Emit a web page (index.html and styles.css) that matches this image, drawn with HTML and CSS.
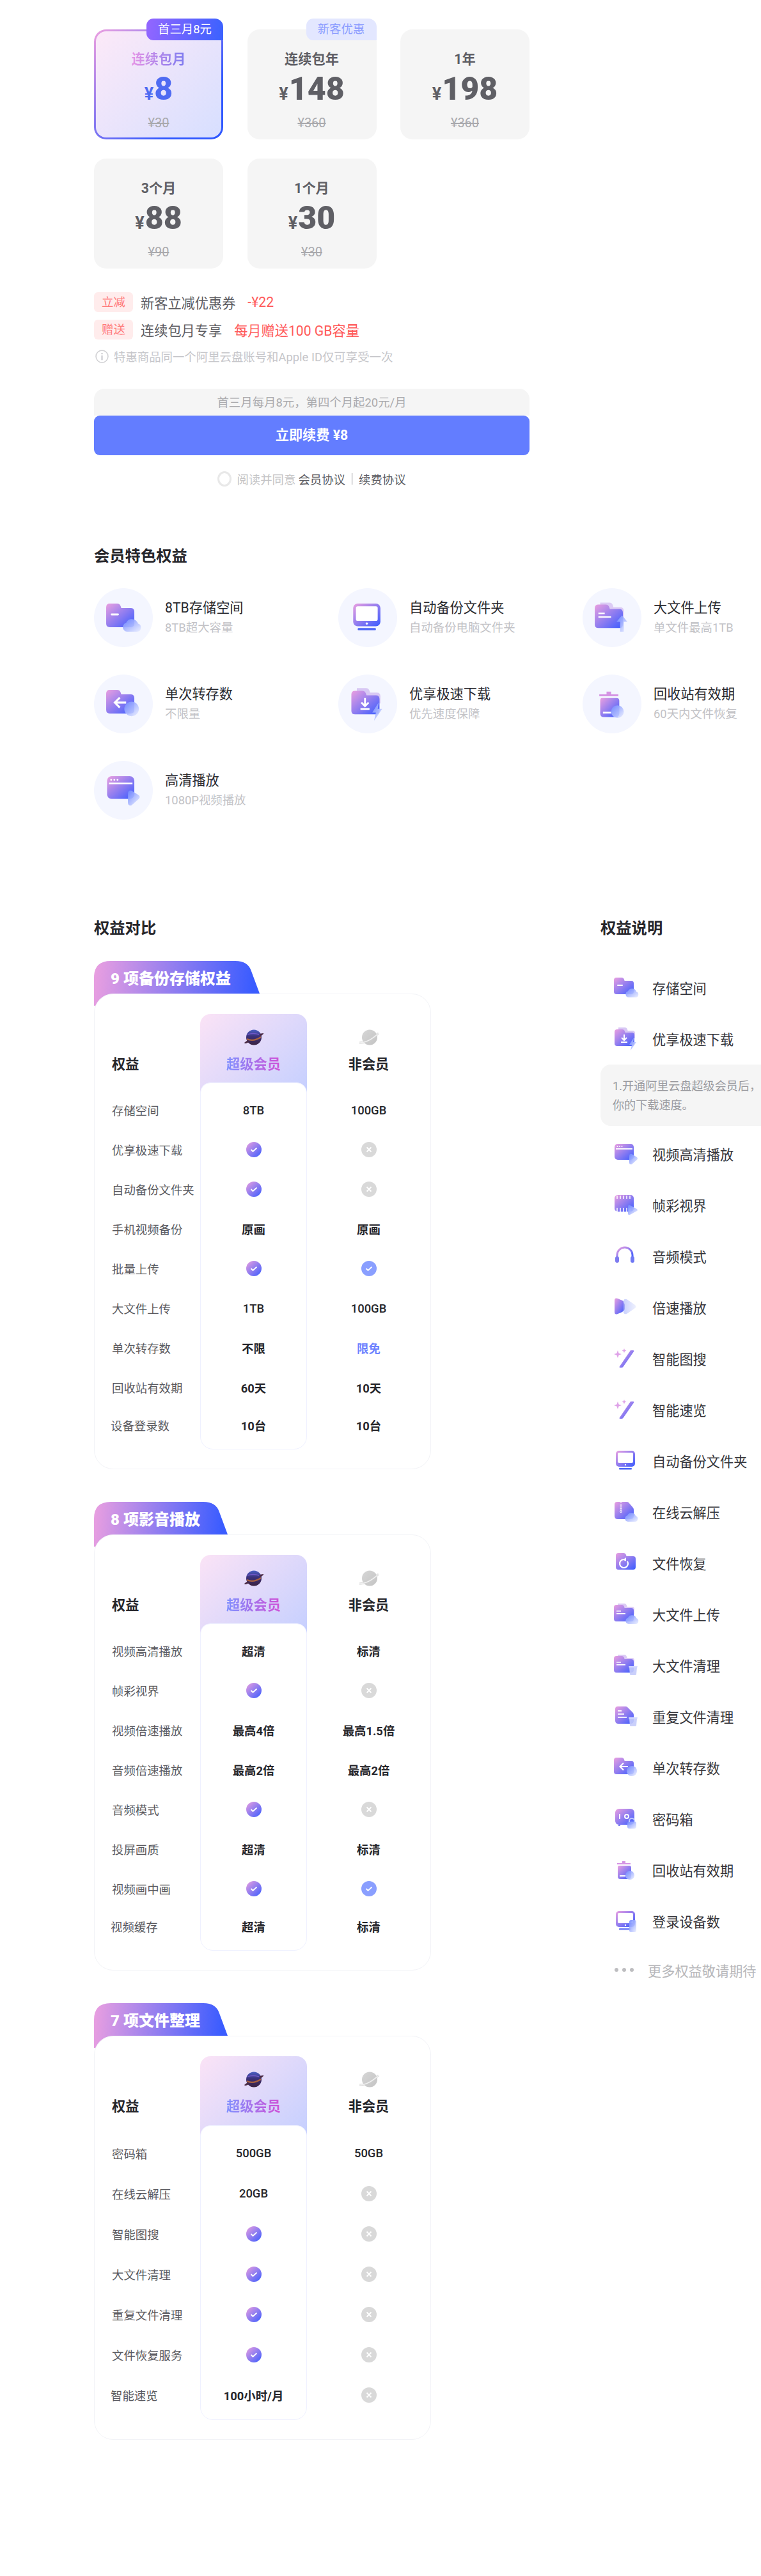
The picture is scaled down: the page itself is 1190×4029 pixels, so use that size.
FILE: index.html
```html
<!DOCTYPE html>
<html lang="zh-CN">
<head>
<meta charset="utf-8">
<title>阿里云盘会员</title>
<link rel="stylesheet" href="styles.css">
</head>
<body>
<svg class="defs" width="0" height="0" aria-hidden="true">
  <defs>
    <linearGradient id="g" x1="0" y1="0" x2="1" y2="1"><stop offset="0" stop-color="#ea9fe0"/><stop offset="1" stop-color="#3a5cff"/></linearGradient>
    <linearGradient id="o" x1="0" y1="0" x2="1" y2="1"><stop offset="0" stop-color="#6f86ff" stop-opacity=".95"/><stop offset="1" stop-color="#e9edff" stop-opacity=".85"/></linearGradient>
    <linearGradient id="o2" x1="0" y1="0" x2="1" y2="0"><stop offset="0" stop-color="#c8cffc" stop-opacity=".95"/><stop offset="1" stop-color="#eceffe" stop-opacity=".9"/></linearGradient>
    <linearGradient id="pl" x1="0" y1="0" x2="0" y2="1"><stop offset="0" stop-color="#4b5fc4"/><stop offset=".45" stop-color="#3a2f78"/><stop offset="1" stop-color="#3b2340"/></linearGradient>
    <linearGradient id="pg" x1="0" y1="0" x2="1" y2="1"><stop offset="0" stop-color="#d6d6d6"/><stop offset="1" stop-color="#c4c4c4"/></linearGradient>

    <symbol id="folder" viewBox="0 0 38 31" overflow="visible"><path fill="url(#g)" d="M4 0h8q3 0 4 3l.6 2H27q4 0 4 4v13q0 4-4 4H4q-4 0-4-4V4q0-4 4-4z"/></symbol>
    <symbol id="cloud" viewBox="0 0 38 31" overflow="visible"><path fill="url(#o)" d="M23 31a5 5 0 0 1-1-9.800a7 7 0 0 1 13 .8a4.600 4.600 0 0 1-1 9z"/></symbol>

    <symbol id="i-storage" viewBox="0 0 38 31" overflow="visible">
      <use href="#folder" width="38" height="31"/><rect x="5" y="11" width="9" height="2" rx="1" fill="#fff"/><use href="#cloud" width="38" height="31"/>
    </symbol>
    <symbol id="i-download" viewBox="0 0 38 31" overflow="visible">
      <path fill="#d8c8f4" d="M7 -2h10q3 0 4 3l.6 2H29q4 0 4 4v8H7z"/>
      <g transform="translate(1 1)"><use href="#folder" width="38" height="31"/></g>
      <path fill="none" stroke="#fff" stroke-width="2" d="M16 9v9M12 14l4 4 4-4M11 21h10"/>
      <path fill="url(#o)" d="M31 14l-7 11h4l-2 9 9-13h-5z"/>
    </symbol>
    <symbol id="i-video" viewBox="0 0 38 31" overflow="visible">
      <rect x="1" y="0" width="30" height="25" rx="5" fill="url(#g)"/>
      <circle cx="5.500" cy="4" r="1" fill="#fff"/><circle cx="9" cy="4" r="1" fill="#fff"/><circle cx="12.500" cy="4" r="1" fill="#fff"/>
      <rect x="3" y="7" width="26" height="1.800" fill="#fff"/>
      <path fill="url(#o)" d="M24 19q0-4 4-3l8 5q2 2 0 4l-8 7q-4 1-4-3z"/>
    </symbol>
    <symbol id="i-film" viewBox="0 0 38 31" overflow="visible">
      <rect x="1" y="0" width="30" height="26" rx="5" fill="url(#g)"/>
      <path stroke="#fff" stroke-width="1.500" d="M5 1v5M10 1v5M15 1v5M20 1v5M25 1v5M5 20v6M10 20v6M15 20v6M20 20v6M25 20v6" fill="none"/>
      <path fill="url(#o)" d="M22 18q0-3 3-2l11 6q2 2 0 3l-11 6q-3 1-3-2z"/>
    </symbol>
    <symbol id="i-phones" viewBox="0 0 38 31" overflow="visible">
      <path fill="none" stroke="url(#g)" stroke-width="3" d="M5 18v-4a12 12 0 0 1 24 0v4"/>
      <rect x="2" y="16" width="6" height="10" rx="3" fill="#7d7bf0"/><rect x="26" y="16" width="6" height="10" rx="3" fill="#6f78f4"/>
    </symbol>
    <symbol id="i-speed" viewBox="0 0 38 31" overflow="visible">
      <path fill="url(#g)" d="M1 5q0-5 5-3l7 3q3 1.500 3 5v8q0 3-3 5l-7 3q-5 2-5-3z"/>
      <path fill="url(#o2)" d="M15 5q1-3 5-2l13 9q3 3 0 5l-13 9q-4 1-5-2z"/>
      <path fill="#7b7ff0" fill-opacity=".55" d="M15 9q2 .5 2 3v6q0 2-2 3z"/>
    </symbol>
    <symbol id="i-wand" viewBox="0 0 38 31" overflow="visible">
      <path fill="url(#g)" d="M26 3h4q2 0 1 2L15 28q-1 2-3 2H9q-1-1 0-2z"/>
      <path fill="#dfa2e8" d="M6 3l1.600 4.400L12 9l-4.400 1.600L6 15l-1.600-4.400L0 9l4.400-1.600zM16 0l1 2.500 2.500 1-2.500 1-1 2.500-1-2.500-2.500-1 2.500-1z"/>
    </symbol>
    <symbol id="i-backup" viewBox="0 0 38 31" overflow="visible">
      <rect x="3" y="0" width="30" height="25" rx="5" fill="url(#g)"/>
      <rect x="6" y="3" width="24" height="16" rx="2" fill="#fff"/><circle cx="18" cy="22" r="1.200" fill="#fff"/>
      <rect x="8" y="27" width="20" height="2.500" rx="1" fill="#4c66f6"/>
    </symbol>
    <symbol id="i-unzip" viewBox="0 0 38 31" overflow="visible">
      <path fill="url(#g)" d="M5 0h15q2 0 3 1l6 7q2 2 2 4v10q0 5-5 5H6q-5 0-5-5V4q0-4 4-4z"/>
      <path stroke="#fff" stroke-width="3" stroke-dasharray="1 1.200" d="M11 1v12" fill="none"/><circle cx="11" cy="15" r="1.500" fill="none" stroke="#fff"/>
      <g transform="translate(-1 0)"><use href="#cloud" width="38" height="31"/></g>
    </symbol>
    <symbol id="i-restore" viewBox="0 0 38 31" overflow="visible">
      <g transform="translate(3 0)"><use href="#folder" width="38" height="31"/></g>
      <path fill="none" stroke="#fff" stroke-width="2.200" d="M15 10a6.500 6.500 0 1 0 6 3"/><path fill="#fff" d="M19 7l-5 3.500 5 2.500z"/>
    </symbol>
    <symbol id="i-bigup" viewBox="0 0 38 31" overflow="visible">
      <path fill="#dccbf5" d="M6 -1h10q3 0 4 3l.6 2H28q4 0 4 4v8H6z"/>
      <g transform="translate(0 1)"><use href="#folder" width="38" height="31"/></g>
      <rect x="4" y="10" width="7" height="1.600" fill="#fff"/><rect x="4" y="14" width="14" height="1.600" fill="#fff"/>
      <use href="#cloud" width="38" height="31"/>
    </symbol>
    <symbol id="i-bigarrow" viewBox="0 0 38 31" overflow="visible">
      <path fill="#dccbf5" d="M6 -1h10q3 0 4 3l.6 2H28q4 0 4 4v8H6z"/>
      <g transform="translate(0 1)"><use href="#folder" width="38" height="31"/></g>
      <rect x="4" y="10" width="7" height="1.600" fill="#fff"/><rect x="4" y="14" width="14" height="1.600" fill="#fff"/>
      <path fill="url(#o)" d="M30 13l6 7h-4v11h-4V20h-4z"/>
    </symbol>
    <symbol id="i-bin" viewBox="0 0 38 31" overflow="visible">
      <path fill="#c4cbfb" fill-opacity=".9" d="M24 19h12l-1 11q0 1-2 1h-6q-2 0-2-1z"/>
      <rect x="23" y="17" width="14" height="2" rx="1" fill="#d5daff"/>
    </symbol>
    <symbol id="i-bigclean" viewBox="0 0 38 31" overflow="visible">
      <path fill="#dccbf5" d="M6 -1h10q3 0 4 3l.6 2H28q4 0 4 4v8H6z"/>
      <g transform="translate(0 1)"><use href="#folder" width="38" height="31"/></g>
      <rect x="4" y="10" width="7" height="1.600" fill="#fff"/><rect x="4" y="14" width="14" height="1.600" fill="#fff"/>
      <use href="#i-bin" width="38" height="31"/>
    </symbol>
    <symbol id="i-dup" viewBox="0 0 38 31" overflow="visible">
      <path fill="url(#g)" d="M6 0h12q2 0 3 1l8 8q2 2 2 4v9q0 5-5 5H7q-5 0-5-5V4q0-4 4-4z"/>
      <rect x="6" y="6" width="6" height="1.800" fill="#fff"/><rect x="6" y="11" width="10" height="1.800" fill="#fff"/><rect x="6" y="16" width="14" height="1.800" fill="#fff"/>
      <use href="#i-bin" width="38" height="31"/>
    </symbol>
    <symbol id="i-transfer" viewBox="0 0 38 31" overflow="visible">
      <use href="#folder" width="38" height="31"/>
      <path fill="none" stroke="#fff" stroke-width="2.200" d="M22 14H10M15 8.500L9.500 14 15 19.500"/>
      <circle cx="28" cy="21" r="8" fill="url(#o)"/>
    </symbol>
    <symbol id="i-vault" viewBox="0 0 38 31" overflow="visible">
      <rect x="2" y="0" width="30" height="25" rx="6" fill="url(#g)"/><rect x="7" y="25" width="3" height="2" fill="#7b7ff0"/>
      <rect x="8" y="8" width="2" height="8" fill="#fff"/><circle cx="20" cy="12" r="3" fill="none" stroke="#fff" stroke-width="2"/>
      <rect x="21" y="20" width="14" height="11" rx="3" fill="url(#o)"/><path fill="none" stroke="#bcc5ff" stroke-width="2" d="M24 21v-2a4 4 0 0 1 8 0v2"/>
    </symbol>
    <symbol id="i-recycle" viewBox="0 0 38 31" overflow="visible">
      <path fill="#d594e4" d="M5 5h21v2H5zM13 2h5v3h-5z"/>
      <path fill="url(#g)" d="M8 9h16q3 0 3 3v14q0 4-4 4H10q-4 0-4-4V12q0-3 2-3z"/>
      <rect x="9" y="24" width="9" height="2" fill="#fff"/><circle cx="25" cy="24" r="7" fill="url(#o)"/>
    </symbol>
    <symbol id="i-login" viewBox="0 0 38 31" overflow="visible">
      <rect x="3" y="0" width="30" height="25" rx="5" fill="url(#g)"/><rect x="6" y="3" width="24" height="16" rx="2" fill="#fff"/>
      <circle cx="18" cy="22" r="1.200" fill="#fff"/><rect x="8" y="27" width="18" height="2.500" rx="1" fill="#6a78f6"/>
      <rect x="24" y="14" width="11" height="19" rx="3" fill="url(#o)"/>
    </symbol>

    <symbol id="planet-s" viewBox="0 0 32 25" overflow="visible">
      <circle cx="16" cy="12.500" r="12" fill="url(#pl)"/>
      <path fill="none" stroke="#a8623f" stroke-width="2.200" d="M5 15q10 5 22-3"/>
      <path fill="none" stroke="#7058c8" stroke-width="1.500" d="M6 8q9-3 18 0"/>
      <path fill="#4a2b46" d="M1 21q3-3 6-4l1 3q-3 2-6 2zM25 7q4-1 6-1 1 1-5 5z"/>
    </symbol>
    <symbol id="planet-n" viewBox="0 0 32 25" overflow="visible">
      <circle cx="17" cy="12.500" r="12" fill="url(#pg)"/>
      <path fill="none" stroke="#cfcfcf" stroke-width="3" d="M1 21q14 0 30-15"/>
      <path fill="none" stroke="#f2f2f2" stroke-width="1.600" d="M1 21q14 0 30-15"/>
    </symbol>

    <symbol id="yes" viewBox="0 0 24 24"><circle cx="12" cy="12" r="12" fill="url(#g)"/><path fill="none" stroke="#fff" stroke-width="1.800" d="M7.500 12l3 3 6-5.500"/></symbol>
    <symbol id="yes2" viewBox="0 0 24 24"><circle cx="12" cy="12" r="12" fill="#8a9fff"/><path fill="none" stroke="#fff" stroke-width="1.800" d="M7.500 12l3 3 6-5.500"/></symbol>
    <symbol id="no" viewBox="0 0 24 24"><circle cx="12" cy="12" r="12" fill="#d9d9d9"/><path fill="none" stroke="#fff" stroke-width="1.800" d="M8.500 8.500l7 7M15.500 8.500l-7 7"/></symbol>
  </defs>
</svg>

<div class="page">
  <div class="plans">
    <div class="plan on">
      <span class="badge hot">首三月8元</span>
      <div class="plan-name grad-name">连续包月</div>
      <div class="plan-price"><span class="yen">¥</span>8</div>
      <div class="plan-old">¥30</div>
    </div>
    <div class="plan">
      <span class="badge new">新客优惠</span>
      <div class="plan-name">连续包年</div>
      <div class="plan-price"><span class="yen">¥</span>148</div>
      <div class="plan-old">¥360</div>
    </div>
    <div class="plan">
      <div class="plan-name">1年</div>
      <div class="plan-price"><span class="yen">¥</span>198</div>
      <div class="plan-old">¥360</div>
    </div>
    <div class="plan">
      <div class="plan-name">3个月</div>
      <div class="plan-price"><span class="yen">¥</span>88</div>
      <div class="plan-old">¥90</div>
    </div>
    <div class="plan">
      <div class="plan-name">1个月</div>
      <div class="plan-price"><span class="yen">¥</span>30</div>
      <div class="plan-old">¥30</div>
    </div>
  </div>

  <div class="perks">
    <div class="perk"><span class="perk-tag">立减</span><span class="perk-text">新客立减优惠券</span><span class="perk-red">-¥22</span></div>
    <div class="perk"><span class="perk-tag">赠送</span><span class="perk-text">连续包月专享</span><span class="perk-red">每月赠送100 GB容量</span></div>
    <div class="notice">
      <svg class="notice-icon" viewBox="0 0 20 20"><circle cx="10" cy="10" r="9" fill="none" stroke="#d0d0d3" stroke-width="1.500"/><rect x="9" y="8.500" width="2" height="7" fill="#c8c8cc"/><rect x="9" y="4.800" width="2" height="2" fill="#c8c8cc"/></svg>
      <span>特惠商品同一个阿里云盘账号和Apple ID仅可享受一次</span>
    </div>
  </div>

  <div class="pay">
    <div class="pay-note">首三月每月8元，第四个月起20元/月</div>
    <div class="pay-btn">立即续费 ¥8</div>
  </div>
  <div class="agree">
    <span class="agree-radio"></span>
    <span class="agree-text">阅读并同意</span>
    <span class="agree-link">会员协议</span>
    <span class="agree-sep"></span>
    <span class="agree-link">续费协议</span>
  </div>

  <h2 class="title title-perks">会员特色权益</h2>
  <div class="features">
    <div class="feature"><span class="feature-disc"><svg class="feature-icon"><use href="#i-storage"/></svg></span><div class="feature-body"><div class="feature-name">8TB存储空间</div><div class="feature-sub">8TB超大容量</div></div></div>
    <div class="feature"><span class="feature-disc"><svg class="feature-icon"><use href="#i-backup"/></svg></span><div class="feature-body"><div class="feature-name">自动备份文件夹</div><div class="feature-sub">自动备份电脑文件夹</div></div></div>
    <div class="feature"><span class="feature-disc"><svg class="feature-icon"><use href="#i-bigarrow"/></svg></span><div class="feature-body"><div class="feature-name">大文件上传</div><div class="feature-sub">单文件最高1TB</div></div></div>
    <div class="feature"><span class="feature-disc"><svg class="feature-icon"><use href="#i-transfer"/></svg></span><div class="feature-body"><div class="feature-name">单次转存数</div><div class="feature-sub">不限量</div></div></div>
    <div class="feature"><span class="feature-disc"><svg class="feature-icon"><use href="#i-download"/></svg></span><div class="feature-body"><div class="feature-name">优享极速下载</div><div class="feature-sub">优先速度保障</div></div></div>
    <div class="feature"><span class="feature-disc"><svg class="feature-icon"><use href="#i-recycle"/></svg></span><div class="feature-body"><div class="feature-name">回收站有效期</div><div class="feature-sub">60天内文件恢复</div></div></div>
    <div class="feature"><span class="feature-disc"><svg class="feature-icon"><use href="#i-video"/></svg></span><div class="feature-body"><div class="feature-name">高清播放</div><div class="feature-sub">1080P视频播放</div></div></div>
  </div>

  <div class="compare">
    <div class="compare-main">
      <h2 class="title">权益对比</h2>

      <section class="group first">
        <div class="tab tab-wide">9 项备份存储权益</div>
        <div class="sheet">
          <div class="col col-labels">
            <div class="col-head"><span class="label-head">权益</span></div>
            <div class="col-body">
              <div class="cell">存储空间</div><div class="cell">优享极速下载</div><div class="cell">自动备份文件夹</div><div class="cell">手机视频备份</div><div class="cell">批量上传</div><div class="cell">大文件上传</div><div class="cell">单次转存数</div><div class="cell">回收站有效期</div><div class="cell last">设备登录数</div>
            </div>
          </div>
          <div class="col col-super">
            <div class="col-head"><svg class="planet"><use href="#planet-s"/></svg><span class="head-name grad-super">超级会员</span></div>
            <div class="col-body">
              <div class="cell">8TB</div><div class="cell"><svg class="mark"><use href="#yes"/></svg></div><div class="cell"><svg class="mark"><use href="#yes"/></svg></div><div class="cell strong">原画</div><div class="cell"><svg class="mark"><use href="#yes"/></svg></div><div class="cell">1TB</div><div class="cell strong">不限</div><div class="cell strong">60天</div><div class="cell strong last">10台</div>
            </div>
          </div>
          <div class="col col-free">
            <div class="col-head"><svg class="planet"><use href="#planet-n"/></svg><span class="head-name">非会员</span></div>
            <div class="col-body">
              <div class="cell">100GB</div><div class="cell"><svg class="mark"><use href="#no"/></svg></div><div class="cell"><svg class="mark"><use href="#no"/></svg></div><div class="cell strong">原画</div><div class="cell"><svg class="mark"><use href="#yes2"/></svg></div><div class="cell">100GB</div><div class="cell strong blue">限免</div><div class="cell strong">10天</div><div class="cell strong last">10台</div>
            </div>
          </div>
        </div>
      </section>

      <section class="group">
        <div class="tab">8 项影音播放</div>
        <div class="sheet">
          <div class="col col-labels">
            <div class="col-head"><span class="label-head">权益</span></div>
            <div class="col-body">
              <div class="cell">视频高清播放</div><div class="cell">帧彩视界</div><div class="cell">视频倍速播放</div><div class="cell">音频倍速播放</div><div class="cell">音频模式</div><div class="cell">投屏画质</div><div class="cell">视频画中画</div><div class="cell last">视频缓存</div>
            </div>
          </div>
          <div class="col col-super">
            <div class="col-head"><svg class="planet"><use href="#planet-s"/></svg><span class="head-name grad-super">超级会员</span></div>
            <div class="col-body">
              <div class="cell strong">超清</div><div class="cell"><svg class="mark"><use href="#yes"/></svg></div><div class="cell strong">最高4倍</div><div class="cell strong">最高2倍</div><div class="cell"><svg class="mark"><use href="#yes"/></svg></div><div class="cell strong">超清</div><div class="cell"><svg class="mark"><use href="#yes"/></svg></div><div class="cell strong last">超清</div>
            </div>
          </div>
          <div class="col col-free">
            <div class="col-head"><svg class="planet"><use href="#planet-n"/></svg><span class="head-name">非会员</span></div>
            <div class="col-body">
              <div class="cell strong">标清</div><div class="cell"><svg class="mark"><use href="#no"/></svg></div><div class="cell strong">最高1.5倍</div><div class="cell strong">最高2倍</div><div class="cell"><svg class="mark"><use href="#no"/></svg></div><div class="cell strong">标清</div><div class="cell"><svg class="mark"><use href="#yes2"/></svg></div><div class="cell strong last">标清</div>
            </div>
          </div>
        </div>
      </section>

      <section class="group tall">
        <div class="tab">7 项文件整理</div>
        <div class="sheet">
          <div class="col col-labels">
            <div class="col-head"><span class="label-head">权益</span></div>
            <div class="col-body">
              <div class="cell">密码箱</div><div class="cell">在线云解压</div><div class="cell">智能图搜</div><div class="cell">大文件清理</div><div class="cell">重复文件清理</div><div class="cell">文件恢复服务</div><div class="cell last">智能速览</div>
            </div>
          </div>
          <div class="col col-super">
            <div class="col-head"><svg class="planet"><use href="#planet-s"/></svg><span class="head-name grad-super">超级会员</span></div>
            <div class="col-body">
              <div class="cell">500GB</div><div class="cell">20GB</div><div class="cell"><svg class="mark"><use href="#yes"/></svg></div><div class="cell"><svg class="mark"><use href="#yes"/></svg></div><div class="cell"><svg class="mark"><use href="#yes"/></svg></div><div class="cell"><svg class="mark"><use href="#yes"/></svg></div><div class="cell strong last">100小时/月</div>
            </div>
          </div>
          <div class="col col-free">
            <div class="col-head"><svg class="planet"><use href="#planet-n"/></svg><span class="head-name">非会员</span></div>
            <div class="col-body">
              <div class="cell">50GB</div><div class="cell"><svg class="mark"><use href="#no"/></svg></div><div class="cell"><svg class="mark"><use href="#no"/></svg></div><div class="cell"><svg class="mark"><use href="#no"/></svg></div><div class="cell"><svg class="mark"><use href="#no"/></svg></div><div class="cell"><svg class="mark"><use href="#no"/></svg></div><div class="cell last"><svg class="mark"><use href="#no"/></svg></div>
            </div>
          </div>
        </div>
      </section>
    </div>

    <aside class="explain">
      <h2 class="title">权益说明</h2>
      <ul class="explain-list">
        <li class="explain-item"><svg class="explain-icon"><use href="#i-storage"/></svg>存储空间</li>
        <li class="explain-item"><svg class="explain-icon"><use href="#i-download"/></svg>优享极速下载</li>
        <li class="explain-tip">1.开通阿里云盘超级会员后，<br>你的下载速度。</li>
        <li class="explain-item"><svg class="explain-icon"><use href="#i-video"/></svg>视频高清播放</li>
        <li class="explain-item"><svg class="explain-icon"><use href="#i-film"/></svg>帧彩视界</li>
        <li class="explain-item"><svg class="explain-icon"><use href="#i-phones"/></svg>音频模式</li>
        <li class="explain-item"><svg class="explain-icon"><use href="#i-speed"/></svg>倍速播放</li>
        <li class="explain-item"><svg class="explain-icon"><use href="#i-wand"/></svg>智能图搜</li>
        <li class="explain-item"><svg class="explain-icon"><use href="#i-wand"/></svg>智能速览</li>
        <li class="explain-item"><svg class="explain-icon"><use href="#i-backup"/></svg>自动备份文件夹</li>
        <li class="explain-item"><svg class="explain-icon"><use href="#i-unzip"/></svg>在线云解压</li>
        <li class="explain-item"><svg class="explain-icon"><use href="#i-restore"/></svg>文件恢复</li>
        <li class="explain-item"><svg class="explain-icon"><use href="#i-bigup"/></svg>大文件上传</li>
        <li class="explain-item"><svg class="explain-icon"><use href="#i-bigclean"/></svg>大文件清理</li>
        <li class="explain-item"><svg class="explain-icon"><use href="#i-dup"/></svg>重复文件清理</li>
        <li class="explain-item"><svg class="explain-icon"><use href="#i-transfer"/></svg>单次转存数</li>
        <li class="explain-item"><svg class="explain-icon"><use href="#i-vault"/></svg>密码箱</li>
        <li class="explain-item"><svg class="explain-icon"><use href="#i-recycle"/></svg>回收站有效期</li>
        <li class="explain-item"><svg class="explain-icon"><use href="#i-login"/></svg>登录设备数</li>
        <li class="explain-more"><span class="dots"><i></i><i></i><i></i></span>更多权益敬请期待</li>
      </ul>
    </aside>
  </div>
</div>
</body>
</html>
```
FILE: styles.css
```css
* { box-sizing: border-box; }
html, body { margin: 0; padding: 0; background: #fff; }
body {
  font-family: Roboto, "Noto Sans CJK SC", sans-serif;
  color: #26262b;
  overflow-x: hidden;
}
.defs { display: block; height: 0; overflow: hidden; }
.page { width: 1190px; height: 4029px; padding: 46px 0 0 147px; overflow: hidden; }

/* plans */
.plans { display: grid; grid-template-columns: repeat(3, 202px); grid-auto-rows: 172px; column-gap: 37.500px; row-gap: 30px; }
.plan { position: relative; background: #f5f5f5; border-radius: 19px; text-align: center; color: #5f5f65; padding-top: 32px; }
.plan.on {
  border: 3px solid transparent;
  padding-top: 29px;
  background: linear-gradient(135deg, #fce9f8, #d7dfff) padding-box, linear-gradient(135deg, #ec9fe0, #2f58ff 75%) border-box;
}
.badge { position: absolute; top: -17px; right: 0; height: 34px; line-height: 34px; font-size: 18.400px; border-radius: 11px 13px 0 11px; text-align: center; }
.plan.on .badge { top: -20px; right: -3px; }
.badge.hot { width: 120px; color: #fff; background: linear-gradient(100deg, #9466ff, #3a62ff); }
.badge.new { width: 110px; color: #8c9dff; background: #e3e7ff; }
.plan-name { font-size: 21.200px; line-height: 30px; font-weight: 700; }
.grad-name { background: linear-gradient(90deg, #e695e6, #7d7bf0); -webkit-background-clip: text; background-clip: text; color: transparent; width: max-content; margin: 0 auto; }
.plan-price { font-size: 50px; font-weight: 900; line-height: 56px; margin-top: 3px; }
.plan.on .plan-price { color: #4f6bf2; }
.yen { font-size: 27px; font-weight: 700; margin-right: 1px; }
.plan-old { font-size: 20px; line-height: 26px; margin-top: 4px; color: #a9a9ad; text-decoration: line-through; }

/* perks */
.perks { margin-top: 37px; }
.perk { display: flex; align-items: center; height: 31px; margin-bottom: 12px; font-size: 21.200px; }
.perk-tag { width: 61px; height: 31px; line-height: 31px; text-align: center; background: #ffecec; color: #ff7a7a; border-radius: 6px; font-size: 18.400px; }
.perk-text { margin-left: 12px; color: #5c5c62; }
.perk-red { margin-left: 19px; color: #ff5a5a; }
.notice { display: flex; align-items: center; gap: 8px; height: 24px; margin-top: 14px; margin-left: 2px; font-size: 18.400px; color: #c6c6ca; }
.notice-icon { width: 21px; height: 21px; }

/* pay */
.pay { width: 681px; margin-top: 39px; }
.pay-note { height: 42px; line-height: 44px; text-align: center; background: #f5f5f5; border-radius: 16px 16px 0 0; color: #ababae; font-size: 18.400px; }
.pay-btn { height: 62px; line-height: 62px; text-align: center; background: #637dff; border-radius: 9px; color: #fff; font-weight: 700; font-size: 21.200px; }
.agree { display: flex; align-items: center; justify-content: center; width: 681px; height: 24px; margin-top: 25px; font-size: 18.400px; }
.agree-radio { width: 22px; height: 24px; border: 3px solid #e8e8e8; border-radius: 50%; margin-right: 8px; }
.agree-text { color: #c4c4c6; margin-right: 4px; }
.agree-link { color: #5c5c62; }
.agree-sep { width: 1px; height: 18px; background: #8a8a8e; margin: 0 10px; }

/* headings */
.title { margin: 0; font-size: 24.300px; line-height: 30px; font-weight: 700; color: #26262b; }
.title-perks { margin-top: 94px; }

/* features */
.features { display: grid; grid-template-columns: repeat(3, 382px); grid-auto-rows: 92px; row-gap: 43px; margin-top: 35px; }
.feature { display: flex; align-items: center; gap: 19px; white-space: nowrap; }
.feature-disc { flex: none; width: 92px; height: 92px; border-radius: 50%; background: #f4f6ff; display: flex; align-items: center; justify-content: center; }
.feature-icon { width: 54px; height: 44px; overflow: visible; }
.feature-name { font-size: 21.200px; line-height: 30px; color: #2a2a2f; }
.feature-sub { font-size: 18.400px; line-height: 30px; margin-top: 1px; color: #c2c2c6; }

/* compare */
.compare { display: flex; margin-top: 155px; }
.compare-main { width: 527px; flex: none; }
.explain { width: 251px; margin-left: 265px; flex: none; }
.group { margin-top: 51px; }
.group.first { margin-top: 36px; }
.tab {
  position: relative;
  width: 209px;
  height: 70px;
  padding: 13px 0 0 26px;
  margin-bottom: -19px;
  color: #fff;
  font-size: 24px;
  line-height: 30px;
  font-weight: 900;
  white-space: nowrap;
  background: linear-gradient(95deg, #ea9fe0, #3a5cff 95%);
  clip-path: path("M0 70 V26 Q0 0 26 0 H171 Q191 0 196 16 L209 51 V70 Z");
}
.tab-wide { width: 259px; clip-path: path("M0 70 V26 Q0 0 26 0 H221 Q241 0 246 16 L259 51 V70 Z"); }
.sheet {
  position: relative;
  display: grid;
  grid-template-columns: 165px 167px 1fr;
  width: 527px;
  padding: 31px 0 30px;
  background: #fff;
  border: 1px solid #f2f3f7;
  border-radius: 30px;
}
.col-head { height: 107px; display: flex; flex-direction: column; align-items: center; }
.col-labels .col-head { align-items: flex-start; padding: 64px 0 0 27px; }
.label-head, .head-name { font-size: 21.200px; line-height: 30px; font-weight: 700; color: #26262b; }
.planet { width: 32px; height: 25px; margin-top: 24px; overflow: visible; }
.head-name { margin-top: 15px; }
.grad-super { background: linear-gradient(90deg, #7f90ff, #d04fd6); -webkit-background-clip: text; background-clip: text; color: transparent; }
.col-body { padding: 12px 0 7px; }
.col-super { background: linear-gradient(135deg, #fbe3f6, #c4cfff) no-repeat; background-size: 100% 130px; border-radius: 16px 16px 20px 20px; }
.col-super .col-body { background: #fff; border: 1px solid #eff1ff; border-radius: 16px 16px 20px 20px; padding-top: 11px; padding-bottom: 6px; }
.cell { height: 62px; display: flex; align-items: center; justify-content: center; font-size: 18.400px; font-weight: 500; color: #26262b; }
.cell.strong { font-weight: 700; }
.cell.blue { color: #6d82ff; }
.cell.last { margin-top: -3px; }
.col-labels .cell { justify-content: flex-start; padding-left: 27px; font-weight: 400; color: #5a5a60; white-space: nowrap; }
.col-labels .cell.last { padding-left: 25px; }
.mark { width: 24px; height: 24px; }
.tall .cell { height: 63.100px; }
.tall .cell.last { margin-top: 0; }
.tall .col-head { height: 108px; }

/* explain */
.explain-list { list-style: none; margin: 37px 0 0; padding: 0; }
.explain-item, .explain-more { display: flex; align-items: center; height: 80px; padding-left: 21px; font-size: 21.200px; color: #35353a; white-space: nowrap; }
.explain-icon { flex: none; width: 38px; height: 31px; margin-right: 22px; overflow: visible; }
.explain-tip { height: 96px; margin: 1px 0 3px; padding: 19px 0 0 19px; background: #f5f5f5; border-radius: 16px 0 0 16px; color: #9a9a9f; font-size: 18.100px; line-height: 30px; white-space: nowrap; }
.explain-more { color: #b7b7ba; padding-left: 22px; margin-top: -3px; }
.dots { display: flex; gap: 6px; margin-right: 22px; }
.dots i { display: block; width: 6px; height: 6px; border-radius: 50%; background: #bdbdc0; }
```
